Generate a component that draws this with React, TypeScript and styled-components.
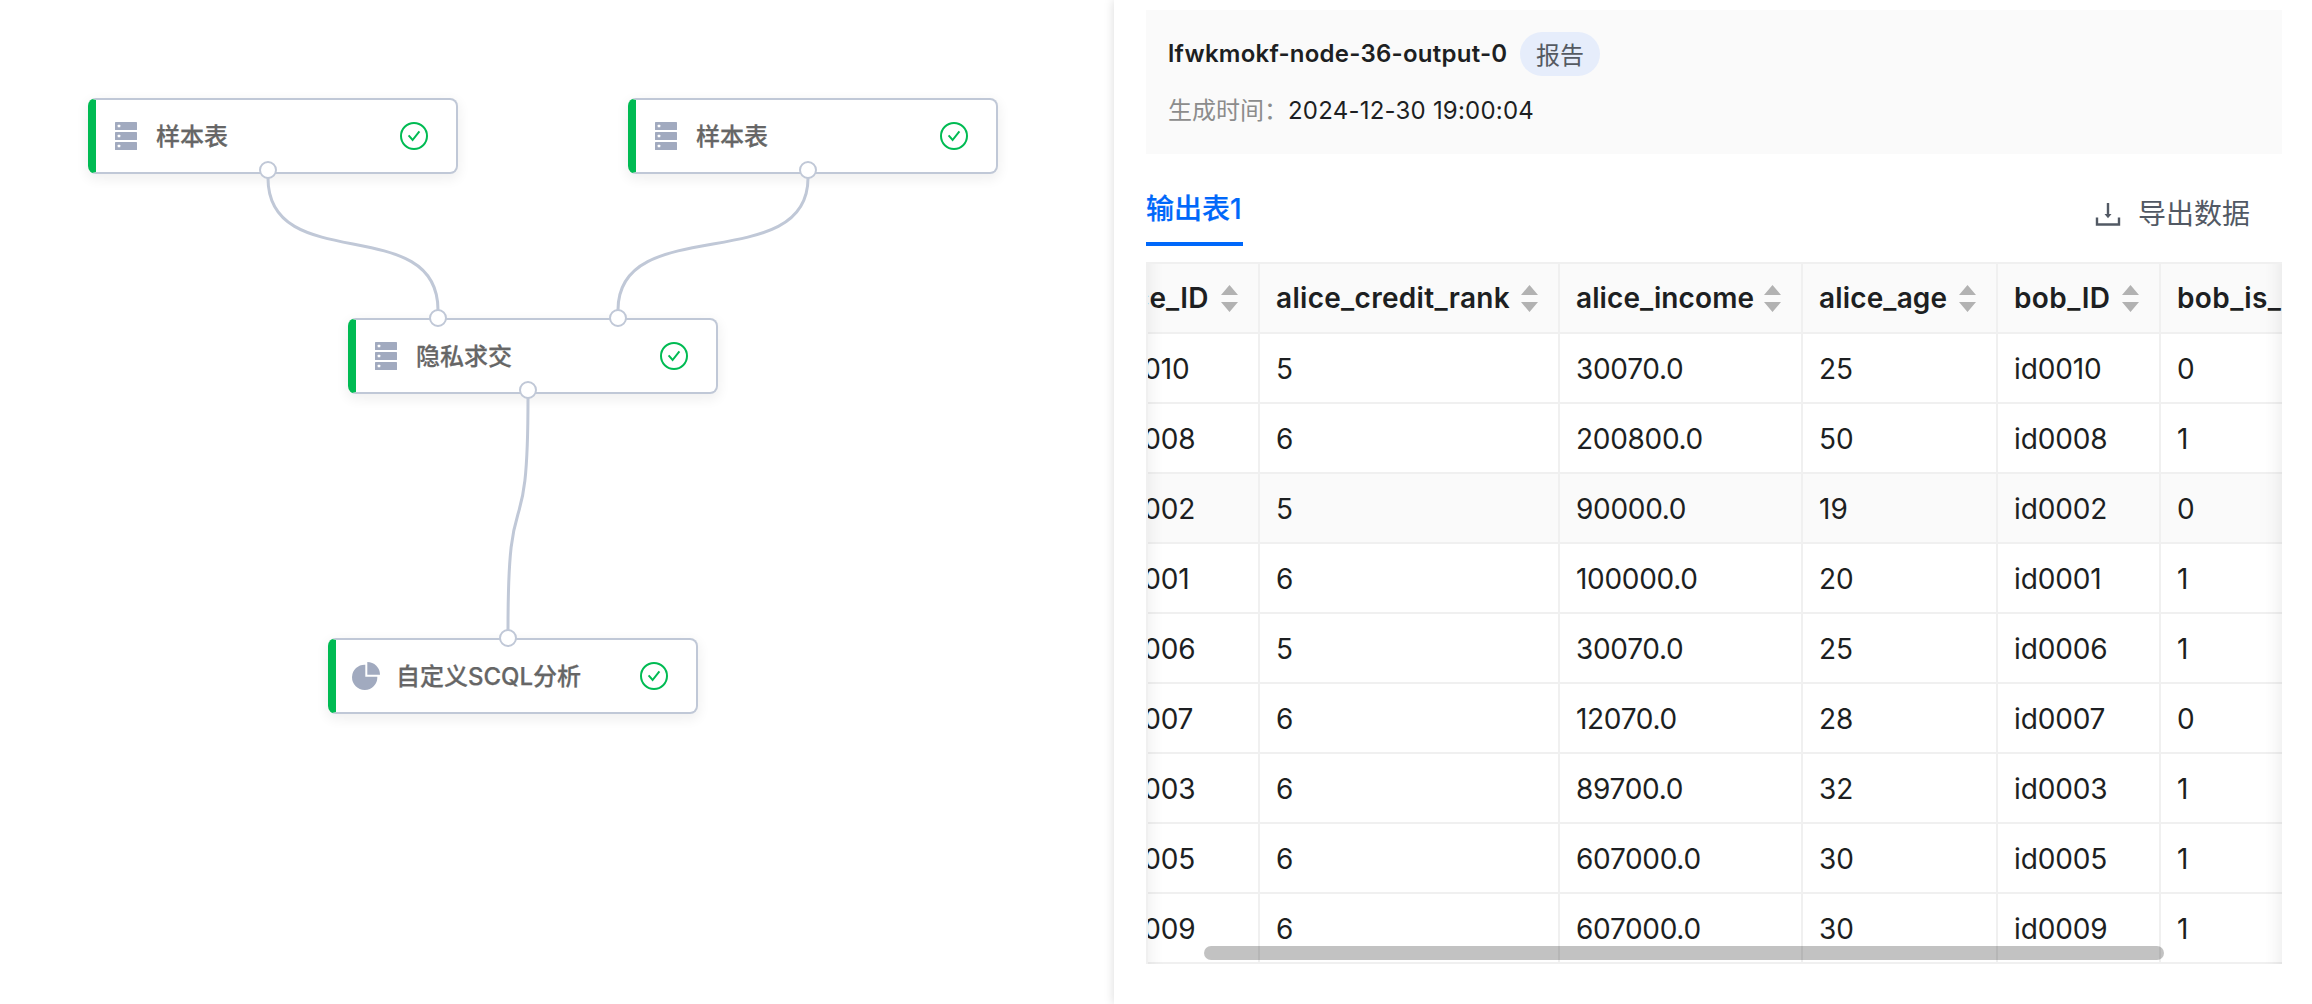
import React from 'react';
import styled, { createGlobalStyle } from 'styled-components';

const Global = createGlobalStyle`
  * { box-sizing: border-box; }
  html, body { margin: 0; background: #fff; }
  body { font-family: Inter, "Noto Sans CJK SC", sans-serif; color: #1d1f22; overflow: hidden; }
`;

const Page = styled.div`
  display: flex;
  width: 2312px;
  height: 1004px;
  overflow: hidden;
  background: #fff;
`;

const Canvas = styled.section`
  position: relative;
  flex: 0 0 1114px;
`;

const Edges = styled.svg`
  position: absolute;
  inset: 0;
  width: 1114px;
  height: 1004px;
  fill: none;
  stroke: #c0c8d7;
  stroke-width: 3;
`;

const NodeBox = styled.div<{ $x: number; $y: number }>`
  position: absolute;
  left: ${(p) => p.$x}px;
  top: ${(p) => p.$y}px;
  display: flex;
  align-items: center;
  width: 370px;
  height: 76px;
  padding: 0 28px 0 16px;
  background: #fff;
  border: 2px solid #c0c8d7;
  border-left: 8px solid #00bb53;
  border-radius: 8px;
  box-shadow: 0 4px 12px 2px rgba(0, 0, 0, 0.06);
`;

const NodeIcon = styled.svg`
  flex: none;
  width: 28px;
  height: 28px;
  fill: #a1aabf;
`;

const NodeName = styled.span`
  flex: 1;
  margin-left: 16px;
  padding-top: 1px;
  font-size: 24px;
  line-height: 36px;
  font-weight: 500;
  color: #666;
  -webkit-text-stroke: 0.25px #666;
  white-space: nowrap;
`;

const StatusIcon = styled.svg`
  flex: none;
  width: 28px;
  height: 28px;
  fill: none;
  stroke: #00bb53;
  stroke-width: 2;
`;

const Port = styled.i<{ $x: number; $y: number }>`
  position: absolute;
  left: ${(p) => p.$x - 9}px;
  top: ${(p) => p.$y - 9}px;
  width: 18px;
  height: 18px;
  border: 2px solid #c0c8d7;
  border-radius: 50%;
  background: #fff;
`;

const Panel = styled.section`
  position: relative;
  flex: 1;
  min-width: 0;
  padding: 10px 30px 0 32px;
  background: #fff;
  box-shadow: 0 0 10px rgba(0, 0, 0, 0.15);
`;

const Summary = styled.header`
  display: flex;
  flex-direction: column;
  gap: 12px;
  height: 144px;
  padding: 22px;
  background: #fafafa;
`;

const SummaryRow = styled.div`
  display: flex;
  align-items: center;
  height: 44px;
  font-size: 24px;
  white-space: nowrap;
`;

const Title = styled.strong`
  width: 352px;
  padding-bottom: 2px;
  font-weight: 600;
  letter-spacing: 0.24px;
`;

const Badge = styled.span`
  display: flex;
  align-items: center;
  justify-content: center;
  width: 80px;
  height: 44px;
  padding-bottom: 2px;
  border-radius: 22px;
  background: #e6edfb;
  color: #555a62;
`;

const Label = styled.span`
  width: 120px;
  padding-bottom: 3px;
  color: #8c8c8c;
`;

const Time = styled.span`
  letter-spacing: 0.22px;
`;

const TabBar = styled.nav`
  display: flex;
  align-items: flex-start;
  justify-content: space-between;
  height: 108px;
  padding: 32px 32px 0 0;
`;

const Tab = styled.button`
  width: 97px;
  height: 60px;
  padding: 3px 0 13px;
  border: 0;
  border-bottom: 4px solid #0068fa;
  background: none;
  font: 500 28px/40px Inter, "Noto Sans CJK SC", sans-serif;
  color: #0068fa;
  -webkit-text-stroke: 0.2px #0068fa;
  text-align: left;
  white-space: nowrap;
`;

const Export = styled.button`
  display: flex;
  align-items: center;
  gap: 17px;
  height: 56px;
  padding: 0;
  border: 0;
  background: none;
  font: 400 28px/40px Inter, "Noto Sans CJK SC", sans-serif;
  color: #525964;
`;

const ExportIcon = styled.svg`
  width: 26px;
  height: 26px;
  fill: none;
  stroke: #525964;
  stroke-width: 2.4;
`;

const TableFrame = styled.div`
  position: relative;
  height: 702px;
  border-top: 2px solid #f0f0f0;
  border-left: 2px solid #f0f0f0;
  overflow: hidden;

  &::after {
    content: '';
    position: absolute;
    inset: -2px 0 0 -2px;
    box-shadow: inset 20px 0 16px -16px rgba(5, 5, 5, 0.07), inset -20px 0 16px -16px rgba(5, 5, 5, 0.07);
  }
`;

const Row = styled.div<{ $tinted?: boolean }>`
  display: grid;
  grid-template-columns: 174px 300px 243px 195px 163px 240px;
  width: 1315px;
  height: 70px;
  margin-left: -62px;
  background: ${(p) => (p.$tinted ? '#fafafa' : '#fff')};
`;

const Cell = styled.div<{ $head?: boolean; $spacing?: number }>`
  display: flex;
  align-items: center;
  justify-content: space-between;
  padding: ${(p) => (p.$head ? '0 20px 0 16px' : '1px 16px 0')};
  border-right: 2px solid #f0f0f0;
  border-bottom: 2px solid #f0f0f0;
  font-size: 28px;
  font-weight: ${(p) => (p.$head ? 600 : 400)};
  letter-spacing: ${(p) => p.$spacing ?? 0}px;
  white-space: nowrap;
`;

const SortIcon = styled.svg`
  flex: none;
  width: 17px;
  height: 27px;
  fill: #b2b2b2;
`;

const ScrollThumb = styled.div`
  position: absolute;
  left: 56px;
  bottom: 4px;
  width: 960px;
  height: 14px;
  border-radius: 7px;
  background: rgba(0, 0, 0, 0.24);
`;

const columns = [
  { name: 'alice_ID', spacing: 0.1, sortable: true },
  { name: 'alice_credit_rank', spacing: 0.3, sortable: true },
  { name: 'alice_income', spacing: 0.1, sortable: true },
  { name: 'alice_age', spacing: 0.15, sortable: true },
  { name: 'bob_ID', spacing: 0.4, sortable: true },
  { name: 'bob_is_', spacing: 0.4, sortable: false },
];

const rows = [
  ['id0010', '5', '30070.0', '25', 'id0010', '0'],
  ['id0008', '6', '200800.0', '50', 'id0008', '1'],
  ['id0002', '5', '90000.0', '19', 'id0002', '0'],
  ['id0001', '6', '100000.0', '20', 'id0001', '1'],
  ['id0006', '5', '30070.0', '25', 'id0006', '1'],
  ['id0007', '6', '12070.0', '28', 'id0007', '0'],
  ['id0003', '6', '89700.0', '32', 'id0003', '1'],
  ['id0005', '6', '607000.0', '30', 'id0005', '1'],
  ['id0009', '6', '607000.0', '30', 'id0009', '1'],
];

const cellSpacing = [-0.15, 0, -0.3, 0, -0.15, 0];

const nodes = [
  { x: 88, y: 98, name: '样本表', kind: 'table' },
  { x: 628, y: 98, name: '样本表', kind: 'table' },
  { x: 348, y: 318, name: '隐私求交', kind: 'table' },
  { x: 328, y: 638, name: '自定义SCQL分析', kind: 'pie' },
];

const ports = [
  [268, 170],
  [808, 170],
  [438, 318],
  [618, 318],
  [528, 390],
  [508, 638],
];

const edges = [
  [268, 170, 438, 318],
  [808, 170, 618, 318],
  [528, 390, 508, 638],
];

// A short straight lead at both ends, joined by one cubic curve.
function edgePath([x1, y1, x2, y2]: number[]) {
  const lead = 8;
  const pull = ((y2 - y1) * 2) / 3;
  return [
    `M${x1} ${y1}V${y1 + lead}`,
    `C${x1} ${y1 + lead + pull} ${x2} ${y2 - lead - pull} ${x2} ${y2 - lead}`,
    `V${y2}`,
  ].join('');
}

function KindIcon({ kind }: { kind: string }) {
  if (kind === 'pie') {
    return (
      <NodeIcon viewBox="0 0 28 28">
        <path d="M13.3 2.7V14.7H25.3A12.65 12.65 0 1 1 13.3 2.7Z" />
        <path d="M15.3 0A12.7 12.7 0 0 1 28 12.7H15.3Z" />
      </NodeIcon>
    );
  }
  return (
    <NodeIcon viewBox="0 0 28 28">
      {[0, 10, 20].map((y) => (
        <g key={y}>
          <rect x="3" y={y} width="22" height="8" rx="0.6" />
          <rect x="5.7" y={y + 2.7} width="2.6" height="2.6" rx="0.6" fill="#fff" />
        </g>
      ))}
    </NodeIcon>
  );
}

export default function App() {
  return (
    <Page>
      <Global />
      <Canvas>
        {nodes.map((n) => (
          <NodeBox key={`${n.x}-${n.y}`} $x={n.x} $y={n.y}>
            <KindIcon kind={n.kind} />
            <NodeName>{n.name}</NodeName>
            <StatusIcon viewBox="0 0 28 28">
              <circle cx="14" cy="14" r="13" />
              <path d="M8.6 13.4L12.6 18L19.4 9.4" />
            </StatusIcon>
          </NodeBox>
        ))}
        <Edges viewBox="0 0 1114 1004">
          {edges.map((e) => (
            <path key={e.join()} d={edgePath(e)} />
          ))}
        </Edges>
        {ports.map(([x, y]) => (
          <Port key={`${x}-${y}`} $x={x} $y={y} />
        ))}
      </Canvas>
      <Panel>
        <Summary>
          <SummaryRow>
            <Title>lfwkmokf-node-36-output-0</Title>
            <Badge>报告</Badge>
          </SummaryRow>
          <SummaryRow>
            <Label>生成时间：</Label>
            <Time>2024-12-30 19:00:04</Time>
          </SummaryRow>
        </Summary>
        <TabBar>
          <Tab>输出表1</Tab>
          <Export>
            <ExportIcon viewBox="0 0 26 26">
              <path d="M2 16.5V23.5H24V16.5M13 2V13" />
              <path d="M9.5 13H16.5L13 17.3Z" fill="#525964" stroke="none" />
            </ExportIcon>
            导出数据
          </Export>
        </TabBar>
        <TableFrame>
          <Row $tinted>
            {columns.map((c) => (
              <Cell key={c.name} $head $spacing={c.spacing}>
                {c.name}
                {c.sortable && (
                  <SortIcon viewBox="0 0 17 27">
                    <path d="M8.5 0L17 10H0ZM0 17H17L8.5 27Z" />
                  </SortIcon>
                )}
              </Cell>
            ))}
          </Row>
          {rows.map((r, i) => (
            <Row key={r[0]} $tinted={i === 2}>
              {r.map((v, j) => (
                <Cell key={j} $spacing={cellSpacing[j]}>
                  {v}
                </Cell>
              ))}
            </Row>
          ))}
          <ScrollThumb />
        </TableFrame>
      </Panel>
    </Page>
  );
}
